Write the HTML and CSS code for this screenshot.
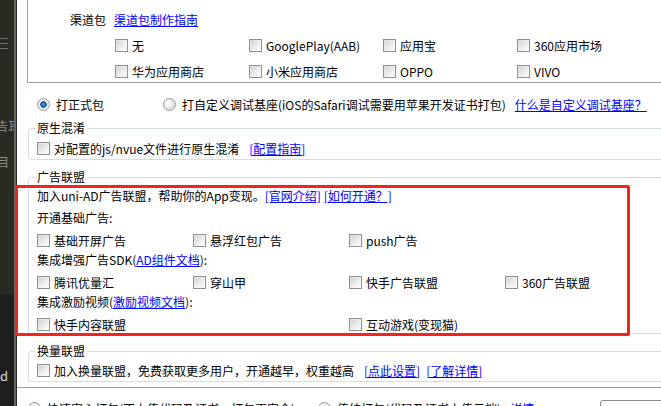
FILE: index.html
```html
<!DOCTYPE html>
<html lang="zh-CN">
<head>
  <meta charset="UTF-8">
  <meta name="viewport" content="width=device-width, initial-scale=1.0">
  <title>原生App-云打包</title>
  <link rel="stylesheet" href="styles.css">
</head>
<body>

<div class="app">
  <aside class="side">
    <div class="side-top">
      <span class="side-menu"></span>
      <span class="side-txt txt-a">告耳</span>
      <span class="side-txt txt-b">目</span>
    </div>
    <div class="side-bottom">
      <span class="side-txt txt-d">d</span>
    </div>
  </aside>

  <main class="panel">
    <div class="channel-box">
      <div class="channel-head">
        <span class="channel-label">渠道包</span>
        <a href="#">渠道包制作指南</a>
      </div>
      <div class="channel-grid">
        <label class="check"><span class="box"></span>无</label>
        <label class="check"><span class="box"></span>GooglePlay(AAB)</label>
        <label class="check"><span class="box"></span>应用宝</label>
        <label class="check"><span class="box"></span>360应用市场</label>
        <label class="check"><span class="box"></span>华为应用商店</label>
        <label class="check"><span class="box"></span>小米应用商店</label>
        <label class="check"><span class="box"></span>OPPO</label>
        <label class="check"><span class="box"></span>VIVO</label>
      </div>
    </div>

    <div class="pack-row">
      <label class="opt opt-first"><span class="radio checked"></span>打正式包</label>
      <label class="opt"><span class="radio"></span>打自定义调试基座(iOS的Safari调试需要用苹果开发证书打包)</label>
      <a href="#" class="pack-link">什么是自定义调试基座？</a>
    </div>

    <fieldset class="group group-native">
      <legend>原生混淆</legend>
      <div class="line">
        <label class="check"><span class="box"></span>对配置的js/nvue文件进行原生混淆</label>
        <a href="#" class="after-link">[配置指南]</a>
      </div>
    </fieldset>

    <fieldset class="group group-ad">
      <legend>广告联盟</legend>
      <div class="text-row">加入uni-AD广告联盟，帮助你的App变现。<a href="#">[官网介绍]</a> <a href="#">[如何开通？]</a></div>
      <div class="text-row">开通基础广告:</div>
      <div class="ad-grid">
        <label class="check"><span class="box"></span>基础开屏广告</label>
        <label class="check"><span class="box"></span>悬浮红包广告</label>
        <label class="check"><span class="box"></span>push广告</label>
      </div>
      <div class="text-row">集成增强广告SDK(<a href="#">AD组件文档</a>):</div>
      <div class="ad-grid">
        <label class="check"><span class="box"></span>腾讯优量汇</label>
        <label class="check"><span class="box"></span>穿山甲</label>
        <label class="check"><span class="box"></span>快手广告联盟</label>
        <label class="check"><span class="box"></span>360广告联盟</label>
      </div>
      <div class="text-row">集成激励视频(<a href="#">激励视频文档</a>):</div>
      <div class="ad-grid">
        <label class="check"><span class="box"></span>快手内容联盟</label>
        <span></span>
        <label class="check"><span class="box"></span>互动游戏(变现猫)</label>
      </div>
    </fieldset>

    <fieldset class="group group-swap">
      <legend>换量联盟</legend>
      <div class="swap-row">
        <label class="check"><span class="box"></span>加入换量联盟，免费获取更多用户，开通越早，权重越高</label>
        <a href="#" class="after-link">[点此设置]</a>
        <a href="#" class="next-link">[了解详情]</a>
      </div>
    </fieldset>

    <div class="footer">
      <label class="opt opt-fast"><span class="radio"></span>快速安心打包(不上传代码及证书，打包更安全)</label>
      <label class="opt"><span class="radio"></span>传统打包(代码及证书上传云端)</label>
      <a href="#" class="pack-link">详情</a>
      <button class="btn">打包(P)</button>
    </div>
  </main>

  <div class="mark"></div>
</div>

</body>
</html>
```

FILE: styles.css
```css
body {
    margin: 0;
    font-family: "Noto Sans CJK SC", "Liberation Sans", sans-serif;
    font-size: 12px;
    color: #000;
    background: #fff;
    overflow: hidden;
}
a {
    color: #0000ff;
    text-decoration: underline;
}
.app {
    position: relative;
    display: flex;
    align-items: flex-start;
    width: 760px;
    height: 406px;
    overflow: hidden;
}

/* linke Leiste */
.side {
    width: 14px;
    height: 406px;
    flex: none;
    display: flex;
    flex-direction: column;
    border-right: 2px solid #66675f;
    overflow: hidden;
}
.side-top {
    height: 295px;
    flex: none;
    background: #2a2a25;
    display: flex;
    flex-direction: column;
}
.side-bottom {
    flex: 1;
    background: #1e1e1e;
    display: flex;
    flex-direction: column;
}
.side-menu {
    display: block;
    width: 8px;
    height: 9px;
    margin-top: 38px;
    border-top: 1px solid #727272;
    border-bottom: 1px solid #727272;
    background: linear-gradient(#727272, #727272) center / 100% 1px no-repeat;
}
.side-txt {
    display: block;
    line-height: 14px;
    white-space: nowrap;
    color: #8c8c8c;
}
.txt-a {
    margin-top: 70px;
    text-indent: -4px;
}
.txt-b {
    margin-top: 22px;
    text-indent: -3px;
}
.txt-d {
    margin-top: 74px;
    color: #d8d8d8;
    font-size: 13px;
}

/* Hauptbereich */
.panel {
    display: block;
    width: 743px;
    height: 406px;
    flex: none;
    border-left: 1px solid #26261f;
    background: #fff;
}

.check {
    display: flex;
    align-items: center;
    white-space: nowrap;
}
.box {
    width: 11px;
    height: 11px;
    flex: none;
    margin-right: 4px;
    border: 1px solid #8e8f8f;
    background: linear-gradient(135deg, #cfcfcf 0%, #ececec 55%, #ffffff 100%);
    box-shadow: inset 0 0 0 1px rgba(255, 255, 255, 0.35);
}
.radio {
    width: 11px;
    height: 11px;
    flex: none;
    margin-right: 6px;
    border: 1px solid #9a9a9a;
    border-radius: 50%;
    background: radial-gradient(circle at 35% 35%, #ffffff 0%, #e2e2e2 60%, #cfcfcf 100%);
}
.radio.checked {
    background: radial-gradient(circle at 50% 50%, #3d9be6 0%, #1f6fb8 26%, #1a4f86 38%, #e6e6e6 46%, #f6f6f6 100%);
}

/* Kanalpakete */
.channel-box {
    margin: -10px 0 0 10px;
    border: 1px solid #a0a0a0;
    padding-top: 17px;
}
.channel-head {
    display: grid;
    grid-template-columns: 86px auto;
    height: 22px;
    align-items: center;
}
.channel-label {
    text-align: right;
    padding-right: 8px;
}
.channel-head a {
    justify-self: start;
}
.channel-grid {
    display: grid;
    grid-template-columns: repeat(4, 134px);
    grid-auto-rows: 22px;
    row-gap: 4px;
    margin-top: 4px;
    padding-left: 87px;
}

.pack-row {
    display: flex;
    align-items: center;
    height: 22px;
    margin-top: 10px;
    padding-left: 20px;
    white-space: nowrap;
}
.opt {
    display: flex;
    align-items: center;
    white-space: nowrap;
}
.opt-first {
    width: 126px;
}
.pack-link {
    margin-left: 9px;
}

/* Gruppen */
.group {
    margin: 0 0 0 11px;
    border: 1px solid #d5dde5;
    border-radius: 3px;
    min-width: 0;
}
.group legend {
    padding: 0 2px;
    margin-left: -2px;
    line-height: 14px;
}
.group-native {
    margin-top: 6px;
    padding: 5px 0 3px 8px;
}
.line {
    display: flex;
    align-items: center;
    height: 16px;
}
.after-link {
    margin-left: 10px;
}
.next-link {
    margin-left: 6px;
}

.group-ad {
    margin-top: 10px;
    padding: 1px 0 0 8px;
}
.text-row {
    height: 22px;
    line-height: 22px;
    white-space: pre;
}
.ad-grid {
    display: grid;
    grid-template-columns: repeat(4, 156px);
    height: 20px;
    align-items: center;
    margin-top: 1px;
    margin-bottom: -1px;
}

.group-swap {
    margin-top: 10px;
    padding: 2px 0 1px 8px;
}
.swap-row {
    display: flex;
    align-items: center;
    height: 20px;
}

.footer {
    display: flex;
    align-items: flex-start;
    margin-top: 5px;
    border-top: 1px solid #a0a0a0;
    padding: 12px 80px 0 11px;
    height: 40px;
}
.footer .opt,
.footer .pack-link {
    margin-top: 2px;
    line-height: 13px;
}
.opt-fast {
    width: 290px;
}
.btn {
    margin-left: auto;
    width: 80px;
    height: 24px;
    font: inherit;
    background: linear-gradient(#ffffff, #e6e6e6);
    border: 1px solid #8a8a8a;
    border-radius: 3px;
}

/* rote Markierung */
.mark {
    position: absolute;
    left: 15px;
    top: 185px;
    width: 609px;
    height: 145px;
    border: 3px solid #f2241c;
    border-radius: 2px;
}
```
